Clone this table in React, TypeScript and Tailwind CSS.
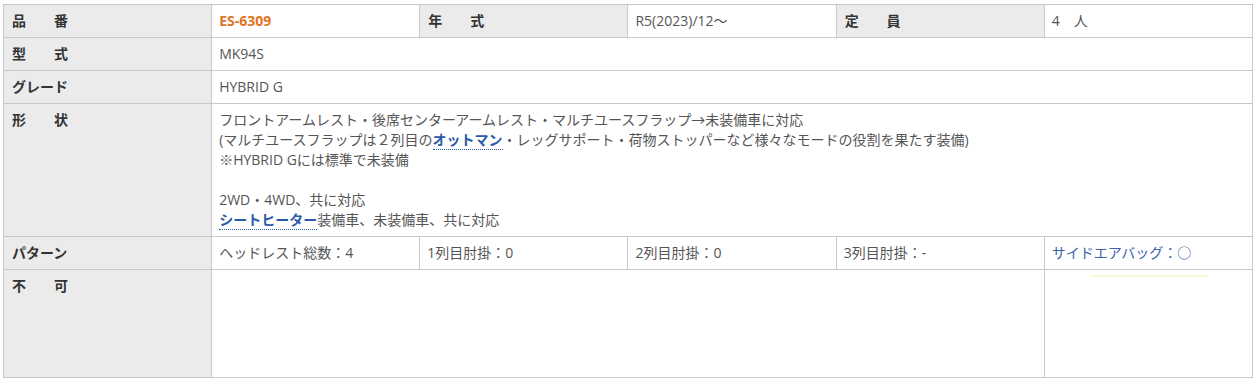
import React from 'react';

const th = 'border border-[#c8c8c8] bg-[#ebebeb] px-[8px] py-[6px] text-left align-top font-bold text-[#333]';
const td = 'border border-[#c8c8c8] bg-white px-[7px] py-[6px] align-top text-[#555]';
const link = 'font-bold text-[#2b5aa8] border-b border-dotted border-[#2b5aa8]';

export default function App() {
  return (
    <div
      className="min-h-[380px] bg-white pl-[3px] pr-[2px] pt-[4px] text-[14px] leading-[20px]"
      style={{ fontFamily: '"Open Sans", "Noto Sans CJK JP", sans-serif' }}
    >
      <table className="w-full table-fixed border-collapse">
        <colgroup>
          <col />
          <col />
          <col />
          <col />
          <col />
          <col />
        </colgroup>
        <tbody>
          <tr>
            <th className={th}>品　　番</th>
            <td className={td}>
              <span className="font-bold text-[#e2741f]">ES-6309</span>
            </td>
            <th className={th}>年　　式</th>
            <td className={td}>R5(2023)/12～</td>
            <th className={th}>定　　員</th>
            <td className={td}>4　人</td>
          </tr>
          <tr>
            <th className={th}>型　　式</th>
            <td className={td} colSpan={5}>MK94S</td>
          </tr>
          <tr>
            <th className={th}>グレード</th>
            <td className={td} colSpan={5}>HYBRID G</td>
          </tr>
          <tr>
            <th className={th}>形　　状</th>
            <td className={td} colSpan={5}>
              フロントアームレスト・後席センターアームレスト・マルチユースフラップ→未装備車に対応
              <br />
              (マルチユースフラップは２列目の<span className={link}>オットマン</span>・レッグサポート・荷物ストッパーなど様々なモードの役割を果たす装備)
              <br />
              ※HYBRID Gには標準で未装備
              <br />
              <br />
              2WD・4WD、共に対応
              <br />
              <span className={link}>シートヒーター</span>装備車、未装備車、共に対応
            </td>
          </tr>
          <tr>
            <th className={th}>パターン</th>
            <td className={td}>ヘッドレスト総数：4</td>
            <td className={td}>1列目肘掛：0</td>
            <td className={td}>2列目肘掛：0</td>
            <td className={td}>3列目肘掛：-</td>
            <td className={td}>
              <span className="text-[#3a62ad]">サイドエアバッグ：○</span>
            </td>
          </tr>
          <tr>
            <th className={`${th} h-[108px]`}>不　　可</th>
            <td className={td} colSpan={4}></td>
            <td className="border border-[#c8c8c8] bg-white px-[7px] py-[5px] align-top">
              <div className="ml-[38px] h-[2px] w-[118px] bg-[#fafad8]" />
            </td>
          </tr>
        </tbody>
      </table>
    </div>
  );
}
